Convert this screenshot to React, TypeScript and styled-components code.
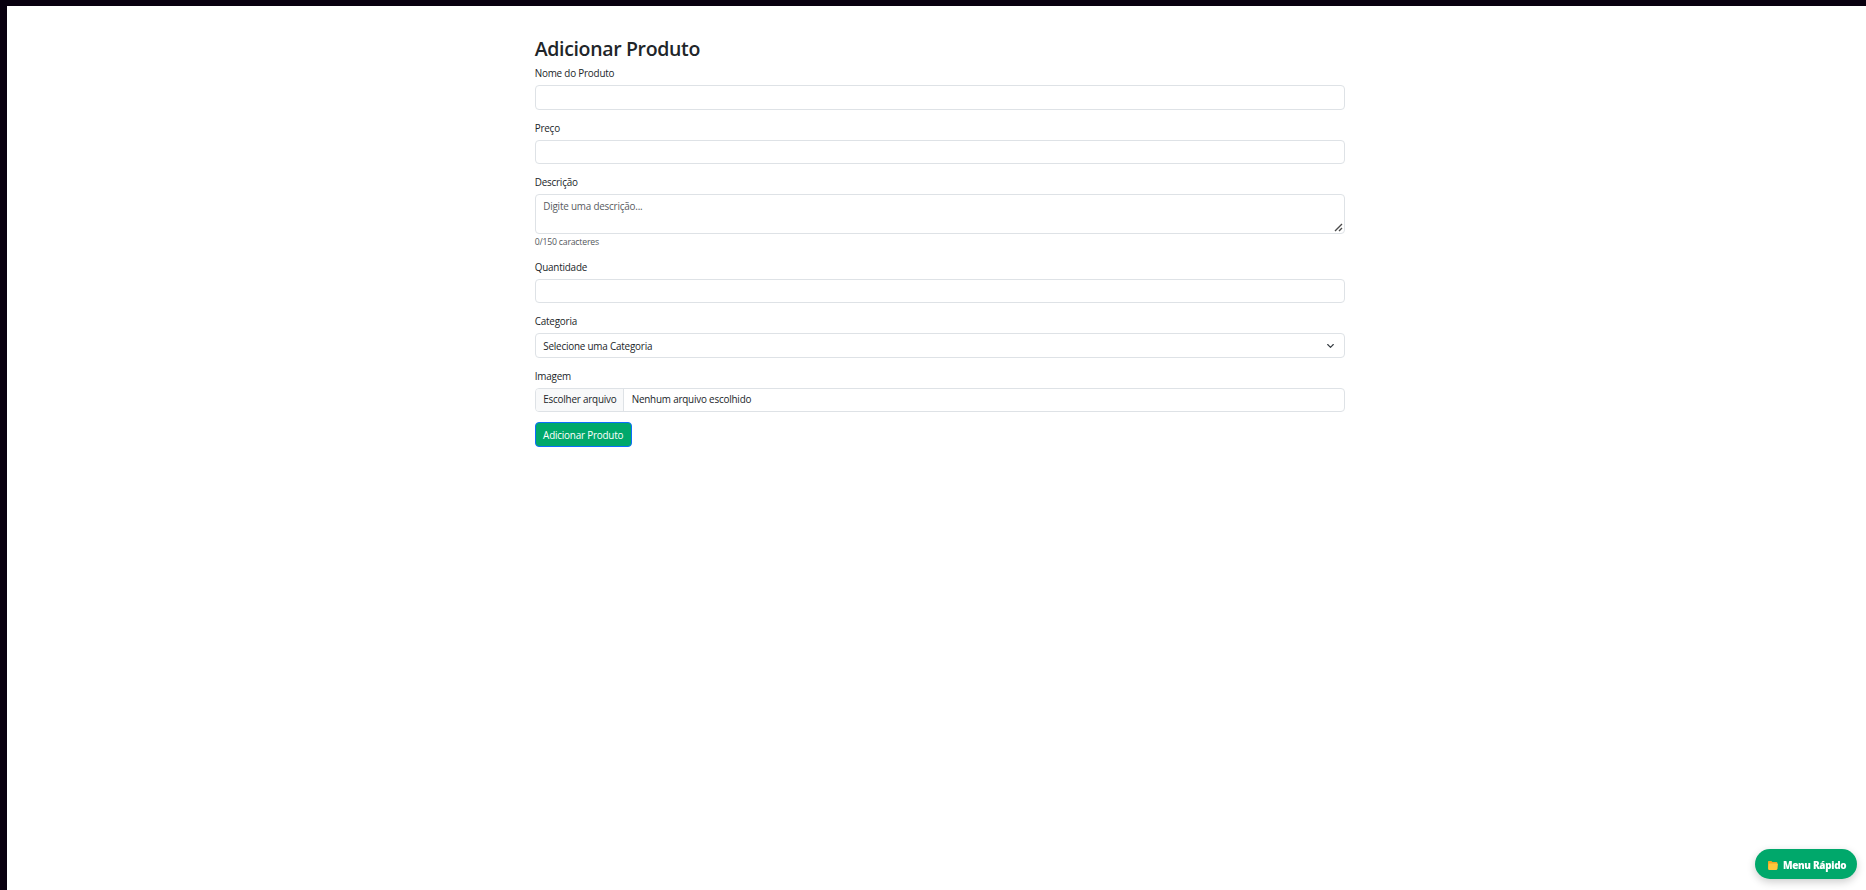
import React, { useState } from 'react';
import styled, { createGlobalStyle } from 'styled-components';

const GlobalStyle = createGlobalStyle`
  *, *::before, *::after { box-sizing: border-box; }
  body {
    margin: 0;
    background: #08000f;
    color: #212529;
    font-family: "Segoe UI", "Open Sans", "Noto Sans", sans-serif;
    font-size: 9.9px;
    line-height: 16px;
    letter-spacing: -0.2px;
    overflow: hidden;
  }
  input, textarea, button { letter-spacing: inherit; }
`;

const Frame = styled.div`
  height: 100vh;
  padding: 6px 0 0 7px;
`;

const Page = styled.main`
  display: flex;
  justify-content: center;
  height: 100%;
  padding: 32px 0 0 6.4px;
  background: #fff;
`;

const Form = styled.form`
  display: flex;
  flex-direction: column;
  align-items: flex-start;
  width: 810px;
`;

const Title = styled.h2`
  margin: 0 0 4px;
  font-size: 19.5px;
  font-weight: 600;
  line-height: 22px;
  letter-spacing: -0.34px;
  white-space: nowrap;
`;

const Field = styled.div`
  display: flex;
  flex-direction: column;
  width: 100%;
  margin-bottom: 9px;
`;

const Label = styled.label`
  height: 16px;
  margin-bottom: 5px;
  align-self: flex-start;
  line-height: 18px;
  white-space: nowrap;
`;

const Input = styled.input<{ $height: number }>`
  width: 100%;
  height: ${(p) => p.$height}px;
  padding: 0 8px;
  border: 1px solid #dee2e6;
  border-radius: 4px;
  background: #fff;
  color: inherit;
  font: inherit;
  outline: none;
`;

const AreaWrap = styled.div`
  position: relative;
  height: 40px;
`;

const TextArea = styled.textarea`
  display: block;
  width: 100%;
  height: 40px;
  padding: 3px 7.5px;
  border: 1px solid #dee2e6;
  border-radius: 4px;
  color: inherit;
  font: inherit;
  resize: none;
  outline: none;
  &::placeholder { color: #595c5f; opacity: 1; }
`;

const Grip = styled.svg`
  position: absolute;
  right: 2px;
  bottom: 2px;
`;

const Counter = styled.small`
  height: 15px;
  color: #54585c;
  font-size: 8.7px;
  line-height: 16px;
  white-space: nowrap;
`;

const Select = styled.button`
  display: flex;
  align-items: center;
  justify-content: space-between;
  height: 25px;
  padding: 0 10px 0 7.5px;
  border: 1px solid #dee2e6;
  border-radius: 4px;
  background: #fff;
  color: inherit;
  font: inherit;
`;

const FilePicker = styled.div`
  display: flex;
  height: 24px;
  border: 1px solid #dee2e6;
  border-radius: 4px;
  overflow: hidden;
  line-height: 21px;
  white-space: nowrap;
`;

const FileButton = styled.span`
  width: 88px;
  padding-left: 7.5px;
  border-right: 1px solid #dee2e6;
  background: #f8f9fa;
`;

const FileName = styled.span`
  padding-left: 8px;
`;

const Submit = styled.button`
  display: flex;
  align-items: center;
  justify-content: center;
  width: 97px;
  height: 25px;
  margin-top: 1px;
  padding: 0;
  border: 1px solid #0d6efd;
  border-radius: 4px;
  background: #00a86b;
  color: #fff;
  font: inherit;
  white-space: nowrap;
`;

const QuickMenu = styled.button`
  position: fixed;
  right: 9px;
  bottom: 11px;
  display: flex;
  align-items: center;
  width: 102px;
  height: 30px;
  padding: 1px 0 0 13px;
  gap: 5px;
  border: 0;
  border-radius: 15px;
  background: #00a86b;
  box-shadow: 0 3px 8px rgba(0, 0, 0, 0.2);
  color: #fff;
  font: inherit;
  font-weight: 800;
  letter-spacing: -0.3px;
  white-space: nowrap;
`;

const FolderIcon = styled.svg`
  flex: none;
  margin-top: 2px;
`;

const Folder = () => (
  <FolderIcon width="10" height="9" viewBox="0 0 10 9" aria-hidden="true">
    <path d="M0 .8Q0 0 .8 0h2.6l1 1h4.2q.7 0 .7.8V8H.8Q0 8 0 7.2z" fill="#f5a623" />
    <path d="M1.4 2.4h7.9q.7 0 .6.7l-.6 5q-.1.8-.9.8H.9q-.8 0-.7-.8l.5-5q.1-.7.7-.7z" fill="#ffc83d" />
  </FolderIcon>
);

export default function App() {
  const [description, setDescription] = useState('');
  return (
    <>
      <GlobalStyle />
      <Frame>
        <Page>
          <Form onSubmit={(e) => e.preventDefault()}>
            <Title>Adicionar Produto</Title>
            <Field>
              <Label htmlFor="nome">Nome do Produto</Label>
              <Input id="nome" $height={25} />
            </Field>
            <Field>
              <Label htmlFor="preco">Preço</Label>
              <Input id="preco" $height={24} />
            </Field>
            <Field>
              <Label htmlFor="descricao">Descrição</Label>
              <AreaWrap>
                <TextArea
                  id="descricao"
                  maxLength={150}
                  placeholder="Digite uma descrição..."
                  value={description}
                  onChange={(e) => setDescription(e.target.value)}
                />
                <Grip width="9" height="9" viewBox="0 0 9 9" aria-hidden="true">
                  <path d="M1 8L8 1M5 8L8 5" fill="none" stroke="#4a4a4a" strokeWidth="1.4" />
                </Grip>
              </AreaWrap>
              <Counter>{`${description.length}/150 caracteres`}</Counter>
            </Field>
            <Field>
              <Label htmlFor="quantidade">Quantidade</Label>
              <Input id="quantidade" $height={24} />
            </Field>
            <Field>
              <Label>Categoria</Label>
              <Select type="button">
                <span>Selecione uma Categoria</span>
                <svg width="7" height="6" viewBox="0 0 7 6" aria-hidden="true">
                  <path d="M.7 1.5L3.5 4.3 6.3 1.5" fill="none" stroke="#343a40" strokeWidth="1.1" strokeLinecap="round" strokeLinejoin="round" />
                </svg>
              </Select>
            </Field>
            <Field>
              <Label>Imagem</Label>
              <FilePicker>
                <FileButton>Escolher arquivo</FileButton>
                <FileName>Nenhum arquivo escolhido</FileName>
              </FilePicker>
            </Field>
            <Submit type="submit">Adicionar Produto</Submit>
          </Form>
        </Page>
      </Frame>
      <QuickMenu type="button">
        <Folder />
        <span>Menu Rápido</span>
      </QuickMenu>
    </>
  );
}
